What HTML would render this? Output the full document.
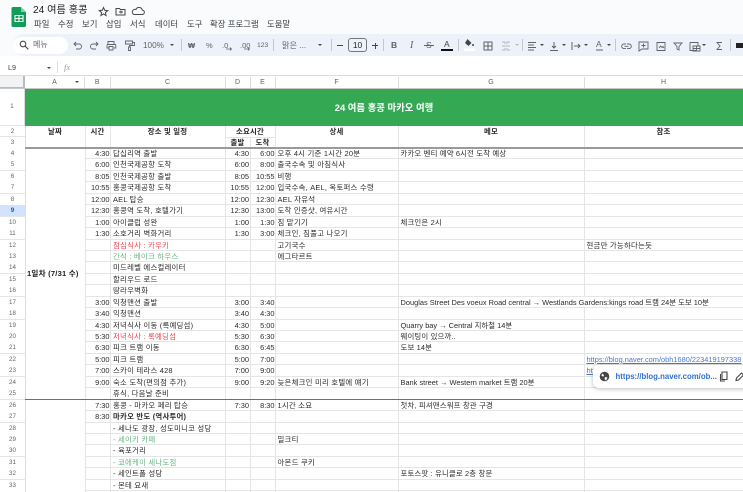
<!DOCTYPE html>
<html lang="ko"><head><meta charset="utf-8"><style>
html,body{margin:0;padding:0;width:743px;height:492px;overflow:hidden;background:#f9fbfd}
*{box-sizing:border-box}
body{font-family:"Liberation Sans","Noto Sans CJK KR",sans-serif;color:#202124;position:relative}
.a{position:absolute;white-space:nowrap}
#tb{position:absolute;left:13px;top:34px;width:740px;height:22px;background:#edf2fa;border-radius:11px}
#fb{position:absolute;left:0;top:56px;width:743px;height:20px;background:#fff;border-bottom:1px solid #dadce0}
#grid{position:absolute;left:0;top:76px;width:743px;height:416px;background:#fff;overflow:hidden}
.m{position:absolute;top:19px;font-size:8.4px;line-height:11px;color:#3c4043;white-space:nowrap}
.t{position:absolute;font-size:8.2px;color:#5f6368;line-height:11px;top:40px;white-space:nowrap}
.ic{position:absolute}
.sep{position:absolute;top:39px;width:1px;height:12px;background:#c7c7c7}
.ar{position:absolute;top:44px;width:0;height:0;border-left:2.2px solid transparent;border-right:2.2px solid transparent;border-top:2.4px solid #444746}
.ch{position:absolute;top:77px;height:11px;line-height:11px;font-size:7px;color:#5f6368;text-align:center;border-right:1px solid #dadce0}
.r{position:absolute;left:0;width:743px;height:11.44px;font-size:7.42px;line-height:11px;border-bottom:1px solid #e4e5e6;color:#2b2b2b}
.r>*{position:absolute;top:0;white-space:nowrap}
.n{left:0;width:25px;text-align:center;color:#5f6368;font-size:6.2px;background:#fff;font-style:normal}
.b{left:85px;width:24.5px;text-align:right}
.c{left:113px;letter-spacing:.22px}
.d{left:225px;width:24px;text-align:right}
.e{left:250px;width:24.5px;text-align:right}
.f{left:277.5px;letter-spacing:.22px}
.g{left:400.5px;letter-spacing:.15px}
.g.l{letter-spacing:0}
.h{left:586.5px;letter-spacing:.22px}
.h.l{letter-spacing:0}
.red{color:#f4444f}.grn{color:#69b784}
.v{position:absolute;top:89px;bottom:0;width:1px;background:#e4e5e6}
.hd{position:absolute;text-align:center;font-size:7.42px;line-height:11px;font-weight:bold;letter-spacing:.2px;white-space:nowrap;color:#2b2b2b}
.rn{position:absolute;left:0;width:25px;font-size:6.2px;text-align:center;color:#5f6368}
u{color:#4a78cf}
</style></head><body>

<!-- logo -->
<svg class="ic" style="left:11px;top:7px" width="16" height="20" viewBox="0 0 16 20"><path d="M2 0h8l5 5v13.500a1.500 1.500 0 0 1-1.500 1.500H2a1.500 1.500 0 0 1-1.500-1.500V1.500A1.500 1.500 0 0 1 2 0z" fill="#0f9d58"/><path d="M10 0l5 5h-5z" fill="#87ceac"/><path d="M4 8.500h8v6H4zM4 11.500h8M8 8.500v6" fill="none" stroke="#fff" stroke-width="1.100"/></svg>

<div class="a" style="left:33px;top:3px;font-size:10.200px;line-height:15px;color:#1f1f1f">24 여름 홍콩</div>
<svg class="ic" style="left:98px;top:6px" width="50" height="11" viewBox="0 0 50 11" fill="none" stroke="#444746" stroke-width="1"><path d="M5.500 1.500l1.200 2.800 3 .3-2.300 2 .7 3-2.600-1.600-2.600 1.600.7-3-2.300-2 3-.3z"/><path d="M18 2.500h3.500l1 1h4.500v5.500h-9zM21 6h4M23 4.500v3"/><path d="M36 8.500h8a2.200 2.200 0 0 0 .3-4.400 3.300 3.300 0 0 0-6.300-.6 2.600 2.600 0 0 0-2 5z"/></svg>

<div class="m" style="left:34px">파일</div><div class="m" style="left:58px">수정</div><div class="m" style="left:82px">보기</div><div class="m" style="left:106px">삽입</div><div class="m" style="left:130px">서식</div><div class="m" style="left:155px">데이터</div><div class="m" style="left:187px">도구</div><div class="m" style="left:210px">확장 프로그램</div><div class="m" style="left:267px">도움말</div>

<div id="tb"></div>
<div class="a" style="left:13px;top:37px;width:55px;height:17px;background:#fff;border-radius:9px"></div>
<svg class="ic" style="left:19px;top:40px" width="10" height="10" viewBox="0 0 10 10" fill="none" stroke="#444746" stroke-width="1.100"><circle cx="4" cy="4" r="2.800"/><path d="M6 6l3.300 3.300"/></svg>
<div class="t" style="left:33px;top:39px;font-size:8px">메뉴</div>

<svg class="ic" style="left:72px;top:40px" width="66" height="11" viewBox="0 0 66 11" fill="none" stroke="#5f6368" stroke-width=".9"><path d="M2 4h5a2.500 2.500 0 0 1 0 5H4M4 2L2 4l2 2"/><path d="M26 4h-5a2.500 2.500 0 0 0 0 5h3M24 2l2 2-2 2"/><path d="M36 4V1.500h6V4M35 4.500h8a.8.800 0 0 1 .8.8V8h-2M37 8h-2V5M37 6.500h4V10h-4z"/><path d="M53.500 1h7v3h-7zM60.500 2.500h2V5.500h-5V7M56.500 7h2v3.500h-2z"/></svg>

<div class="t" style="left:143px">100%</div><div class="ar" style="left:170px"></div><div class="sep" style="left:181px"></div>
<div class="t" style="left:188px;font-weight:bold;font-size:7.500px">₩</div>
<div class="t" style="left:206px;font-size:7.500px">%</div>
<div class="t" style="left:222px;font-size:7.500px">.0</div>
<svg class="ic" style="left:226px;top:47px" width="7" height="4"><path d="M0 2h5M4 0.500l1.500 1.500L4 3.500" stroke="#5f6368" fill="none" stroke-width=".8"/></svg>
<div class="t" style="left:240px;font-size:7.500px">.00</div>
<svg class="ic" style="left:244px;top:47px" width="7" height="4"><path d="M0 2h5M4 0.500l1.500 1.500L4 3.500" stroke="#5f6368" fill="none" stroke-width=".8"/></svg>
<div class="t" style="left:257px;font-size:6.800px">123</div><div class="sep" style="left:273px"></div>
<div class="t" style="left:282px">맑은 ...</div><div class="ar" style="left:318px"></div><div class="sep" style="left:331px"></div>
<div class="a" style="left:337px;top:45px;width:6px;height:1px;background:#444746"></div>
<div class="a" style="left:348px;top:38px;width:19px;height:14px;border:1px solid #747775;border-radius:3px;font-size:8.400px;line-height:12px;text-align:center;color:#1f1f1f">10</div>
<div class="a" style="left:372px;top:45px;width:6px;height:1px;background:#444746"></div><div class="a" style="left:374.500px;top:42.500px;width:1px;height:6px;background:#444746"></div>
<div class="sep" style="left:383px"></div>
<div class="t" style="left:391px;font-weight:bold;font-size:8.500px;color:#5f6368">B</div>
<div class="t" style="left:410px;font-style:italic;font-family:'Liberation Serif',serif;font-size:10px;color:#5f6368">I</div>
<div class="t" style="left:426px;font-size:8.500px;color:#5f6368">S</div><div class="a" style="left:424px;top:45px;width:10px;height:1px;background:#5f6368"></div>
<div class="t" style="left:444px;font-size:8.500px;color:#444746;top:39px">A</div><div class="a" style="left:441px;top:49px;width:12px;height:2px;background:#111"></div>
<div class="sep" style="left:458px"></div>
<svg class="ic" style="left:463px;top:38px" width="12" height="14" viewBox="0 0 12 14"><path d="M4.500 1l4 4-3 3L2 5z" fill="#444746"/><circle cx="10" cy="7" r="1" fill="#444746"/><rect x="1" y="10.500" width="12" height="2.500" fill="#fff"/></svg>
<svg class="ic" style="left:483px;top:41px" width="10" height="10" fill="none" stroke="#5f6368"><path d="M1 1h8v8H1zM5 1v8M1 5h8"/></svg>
<svg class="ic" style="left:501px;top:41px" width="10" height="10" fill="none" stroke="#b4b8bc"><path d="M1 1h3v2M9 1H6v2M1 9h3V7M9 9H6V7M1 5h8"/></svg><div class="ar" style="left:515px;border-top-color:#bbb"></div>
<div class="sep" style="left:522px"></div>
<svg class="ic" style="left:527px;top:41px" width="10" height="10" stroke="#5f6368"><path d="M1 1.500h8M1 4h6M1 6.500h8M1 9h6"/></svg><div class="ar" style="left:540px"></div>
<svg class="ic" style="left:549px;top:41px" width="10" height="10" stroke="#5f6368" fill="none"><path d="M1 9.500h8M5 1v6M3 5l2 2 2-2"/></svg><div class="ar" style="left:562px"></div>
<svg class="ic" style="left:571px;top:41px" width="10" height="10" stroke="#5f6368" fill="none"><path d="M1 1v8M3 5h6M7 3l2 2-2 2"/></svg><div class="ar" style="left:584px"></div>
<div class="t" style="left:596px;font-size:8.500px;top:39px;color:#5f6368">A</div><svg class="ic" style="left:596px;top:49px" width="8" height="3"><path d="M0 1h7" stroke="#5f6368"/></svg><div class="ar" style="left:607px"></div>
<div class="sep" style="left:615px"></div>
<svg class="ic" style="left:621px;top:41px" width="118" height="11" viewBox="0 0 118 11" fill="none" stroke="#5f6368" stroke-width=".9"><path d="M5 3H3a2.300 2.300 0 0 0 0 4.600h2M6 3h2a2.300 2.300 0 0 1 0 4.600H6M3.500 5.300h4"/><path d="M18 1h9v7h-6l-3 2zM22.500 2.500v4M20.500 4.500h4"/><path d="M36 1.500h8v8h-8zM38 7l1.500-2 1.500 1.500 1-1 1 1.500"/><path d="M53 2h8l-3 3.500V9l-2-1V5.500z"/><path d="M69 1.500h8v3M69 1.500v8h6M72 5h7v5h-7zM72 7.500h7M75.500 5v5"/><path d="M101 1.500h-5l3 3.500-3 3.500h5"/></svg>
<div class="ar" style="left:702px"></div><div class="sep" style="left:730px"></div>
<div class="a" style="left:736px;top:43px;width:7px;height:5px;background:#222"></div>

<div id="fb"></div>
<div class="a" style="left:8px;top:62px;font-size:7.200px;line-height:11px;color:#3c4043">L9</div>
<div class="ar" style="left:47px;top:67px"></div>
<div class="a" style="left:57px;top:62px;width:1px;height:11px;background:#dadce0"></div>
<div class="a" style="left:64px;top:62px;font-size:8.500px;line-height:11px;font-style:italic;font-family:'Liberation Serif',serif;color:#9aa0a6">fx</div>

<div id="grid"></div>
<!-- column headers -->
<div class="a" style="left:0;top:76px;width:25px;height:13px;background:#f1f3f4;border-right:2px solid #b9bbbe;border-bottom:2px solid #b9bbbe"></div>
<div class="ch" style="left:25px;width:60px">A</div>
<div class="ar" style="left:75px;top:81px"></div>
<div class="ch" style="left:85px;width:25.500px">B</div>
<div class="ch" style="left:110.500px;width:115px">C</div>
<div class="ch" style="left:225.500px;width:25px">D</div>
<div class="ch" style="left:250.500px;width:25px">E</div>
<div class="ch" style="left:275.500px;width:123px">F</div>
<div class="ch" style="left:398.500px;width:186px">G</div>
<div class="ch" style="left:584.500px;width:159px">H</div>

<div class="a" style="left:0;top:88px;width:743px;height:1px;background:#c4c7c5"></div>

<!-- vertical gridlines -->
<div class="v" style="left:25px;top:126px;background:#dadce0"></div>
<div class="v" style="left:85px;top:126px"></div>
<div class="v" style="left:110px;top:126px"></div>
<div class="v" style="left:225px;top:126px"></div>
<div class="v" style="left:250px;top:137px"></div>
<div class="v" style="left:275px;top:126px"></div>
<div class="v" style="left:398px;top:126px"></div>
<div class="v" style="left:584px;top:126px"></div>
<div class="a" style="left:584px;top:297px;width:1px;height:10px;background:#fff"></div>

<!-- rows -->
<div class="r" style="top:148.000px"><i class="n">4</i><span class="b">4:30</span><span class="c">답십리역 출발</span><span class="d">4:30</span><span class="e">6:00</span><span class="f">오후 4시 기준 1시간 20분</span><span class="g">카카오 벤티 예약 6시전 도착 예상</span></div>
<div class="r" style="top:159.440px"><i class="n">5</i><span class="b">6:00</span><span class="c">인천국제공항 도착</span><span class="d">6:00</span><span class="e">8:00</span><span class="f">출국수속 및 아침식사</span></div>
<div class="r" style="top:170.880px"><i class="n">6</i><span class="b">8:05</span><span class="c">인천국제공항 출발</span><span class="d">8:05</span><span class="e">10:55</span><span class="f">비행</span></div>
<div class="r" style="top:182.320px"><i class="n">7</i><span class="b">10:55</span><span class="c">홍콩국제공항 도착</span><span class="d">10:55</span><span class="e">12:00</span><span class="f">입국수속, AEL, 옥토퍼스 수령</span></div>
<div class="r" style="top:193.760px"><i class="n">8</i><span class="b">12:00</span><span class="c">AEL 탑승</span><span class="d">12:00</span><span class="e">12:30</span><span class="f">AEL 자유석</span></div>
<div class="r" style="top:205.200px"><i class="n" style="background:#d3e3fd;color:#0b57d0;font-weight:bold">9</i><span class="b">12:30</span><span class="c">홍콩역 도착, 호텔가기</span><span class="d">12:30</span><span class="e">13:00</span><span class="f">도착 인증샷, 여유시간</span></div>
<div class="r" style="top:216.640px"><i class="n">10</i><span class="b">1:00</span><span class="c">아이클럽 성완</span><span class="d">1:00</span><span class="e">1:30</span><span class="f">짐 맡기기</span><span class="g">체크인은 2시</span></div>
<div class="r" style="top:228.080px"><i class="n">11</i><span class="b">1:30</span><span class="c">소호거리 벽화거리</span><span class="d">1:30</span><span class="e">3:00</span><span class="f">체크인, 짐풀고 나오기</span></div>
<div class="r" style="top:239.520px"><i class="n">12</i><span class="c red">점심식사 : 카우키</span><span class="f">고기국수</span><span class="h">현금만 가능하다는듯</span></div>
<div class="r" style="top:250.960px"><i class="n">13</i><span class="c grn">간식 : 베이크 하우스</span><span class="f">에그타르트</span></div>
<div class="r" style="top:262.400px"><i class="n">14</i><span class="c">미드레벨 에스컬레이터</span></div>
<div class="r" style="top:273.840px"><i class="n">15</i><span class="c">할리우드 로드</span></div>
<div class="r" style="top:285.280px"><i class="n">16</i><span class="c">땅라우벽화</span></div>
<div class="r" style="top:296.720px"><i class="n">17</i><span class="b">3:00</span><span class="c">익청맨션 출발</span><span class="d">3:00</span><span class="e">3:40</span><span class="g l">Douglas Street Des voeux Road central → Westlands Gardens:kings road 트램 24분 도보 10분</span></div>
<div class="r" style="top:308.160px"><i class="n">18</i><span class="b">3:40</span><span class="c">익청맨션</span><span class="d">3:40</span><span class="e">4:30</span></div>
<div class="r" style="top:319.600px"><i class="n">19</i><span class="b">4:30</span><span class="c">저녁식사 이동 (록예딩섬)</span><span class="d">4:30</span><span class="e">5:00</span><span class="g l">Quarry bay → Central 지하철 14분</span></div>
<div class="r" style="top:331.040px"><i class="n">20</i><span class="b">5:30</span><span class="c red">저녁식사 : 록예딩섬</span><span class="d">5:30</span><span class="e">6:30</span><span class="g">웨이팅이 있으까..</span></div>
<div class="r" style="top:342.480px"><i class="n">21</i><span class="b">6:30</span><span class="c">피크 트램 이동</span><span class="d">6:30</span><span class="e">6:45</span><span class="g">도보 14분</span></div>
<div class="r" style="top:353.920px"><i class="n">22</i><span class="b">5:00</span><span class="c">피크 트램</span><span class="d">5:00</span><span class="e">7:00</span><span class="h l"><u>https://blog.naver.com/obh1680/223419197338</u></span></div>
<div class="r" style="top:365.360px"><i class="n">23</i><span class="b">7:00</span><span class="c">스카이 테라스 428</span><span class="d">7:00</span><span class="e">9:00</span><span class="h l"><u>https://blog</u></span></div>
<div class="r" style="top:376.800px"><i class="n">24</i><span class="b">9:00</span><span class="c">숙소 도착(편의점 추가)</span><span class="d">9:00</span><span class="e">9:20</span><span class="f">늦은체크인 미리 호텔에 얘기</span><span class="g l">Bank street → Western market 트램 20분</span></div>
<div class="r" style="top:388.240px"><i class="n">25</i><span class="c">휴식, 다음날 준비</span></div>
<div class="r" style="top:399.680px"><i class="n">26</i><span class="b">7:30</span><span class="c">홍콩 - 마카오 페리 탑승</span><span class="d">7:30</span><span class="e">8:30</span><span class="f">1시간 소요</span><span class="g">첫차, 피셔맨스워프 창관 구경</span></div>
<div class="r" style="top:411.120px"><i class="n">27</i><span class="b">8:30</span><span class="c" style="font-weight:bold">마카오 반도 (역사투어)</span></div>
<div class="r" style="top:422.560px"><i class="n">28</i><span class="c">- 세나도 광장, 성도미니코 성당</span></div>
<div class="r" style="top:434.000px"><i class="n">29</i><span class="c grn">- 세이키 카페</span><span class="f">밀크티</span></div>
<div class="r" style="top:445.440px"><i class="n">30</i><span class="c">- 육포거리</span></div>
<div class="r" style="top:456.880px"><i class="n">31</i><span class="c grn">- 쿄에케이 세나도점</span><span class="f">아몬드 쿠키</span></div>
<div class="r" style="top:468.320px"><i class="n">32</i><span class="c">- 세인트폴 성당</span><span class="g">포토스팟 : 유니클로 2층 창문</span></div>
<div class="r" style="top:479.760px"><i class="n">33</i><span class="c">- 몬테 요새</span></div>

<!-- header rows -->
<div class="a" style="left:25px;top:89px;width:718px;height:37px;background:#34a853;color:#fff;font-weight:bold;font-size:9.400px;line-height:37px;text-align:center">24 여름 홍콩 마카오 여행</div>
<div class="a" style="left:0;top:89px;width:25px;height:37px;border-bottom:1px solid #e4e5e6;border-right:1px solid #dadce0;background:#fff;font-size:6.200px;line-height:36px;text-align:center;color:#5f6368">1</div>
<div class="rn" style="top:126px;height:11px;line-height:11px;border-bottom:1px solid #e4e5e6">2</div>
<div class="rn" style="top:137px;height:11px;line-height:11px">3</div>
<div class="hd" style="left:25px;top:126px;width:60px">날짜</div>
<div class="hd" style="left:85px;top:126px;width:25px">시간</div>
<div class="hd" style="left:110px;top:126px;width:115px">장소 및 일정</div>
<div class="hd" style="left:225px;top:126px;width:50px">소요시간</div>
<div class="hd" style="left:225px;top:137px;width:25px">출발</div>
<div class="hd" style="left:250px;top:137px;width:25px">도착</div>
<div class="hd" style="left:275px;top:126px;width:123px">상세</div>
<div class="hd" style="left:398px;top:126px;width:186px">메모</div>
<div class="hd" style="left:584px;top:126px;width:159px">참조</div>
<div class="a" style="left:225px;top:137px;width:50px;height:1px;background:#e4e5e6"></div>

<!-- merged date column -->
<div class="a" style="left:26px;top:148px;width:59px;height:251px;background:#fff"></div>
<div class="a" style="left:26px;top:400px;width:59px;height:92px;background:#fff"></div>
<div class="a" style="left:27px;top:268px;font-size:7.600px;line-height:11px;font-weight:bold;letter-spacing:.2px;color:#222">1일차 (7/31 수)</div>

<!-- heavy lines -->
<div class="a" style="left:25px;top:147px;width:718px;height:1.500px;background:#9a9a9a"></div>
<div class="a" style="left:25px;top:399px;width:718px;height:1px;background:#6f6f6f"></div>

<!-- link popup -->
<div class="a" style="left:593px;top:365px;width:160px;height:23px;background:#fff;border-radius:6px;box-shadow:0 1px 4px rgba(60,64,67,.35)"></div>
<svg class="ic" style="left:599px;top:371px" width="11" height="11" viewBox="0 0 11 11"><circle cx="5.500" cy="5.500" r="4.800" fill="#444746"/><path d="M3 2.500l2 1.500-.5 1.500L2.500 5zM6 6l2.500.5L7 9.500 5.500 8z" fill="#fff"/></svg>
<div class="a" style="left:615.500px;top:371px;font-size:7.800px;line-height:12px;color:#0b57d0;font-weight:bold;opacity:.85">https://blog.naver.com/ob...</div>
<svg class="ic" style="left:719px;top:371px" width="24" height="11" viewBox="0 0 24 11" fill="none" stroke="#444746" stroke-width="1.100"><path d="M3 1h5v7.500H3zM1.500 3v7H6"/><path d="M17 9.500l.5-2.500 5-5 2 2-5 5z"/></svg>
</body></html>
